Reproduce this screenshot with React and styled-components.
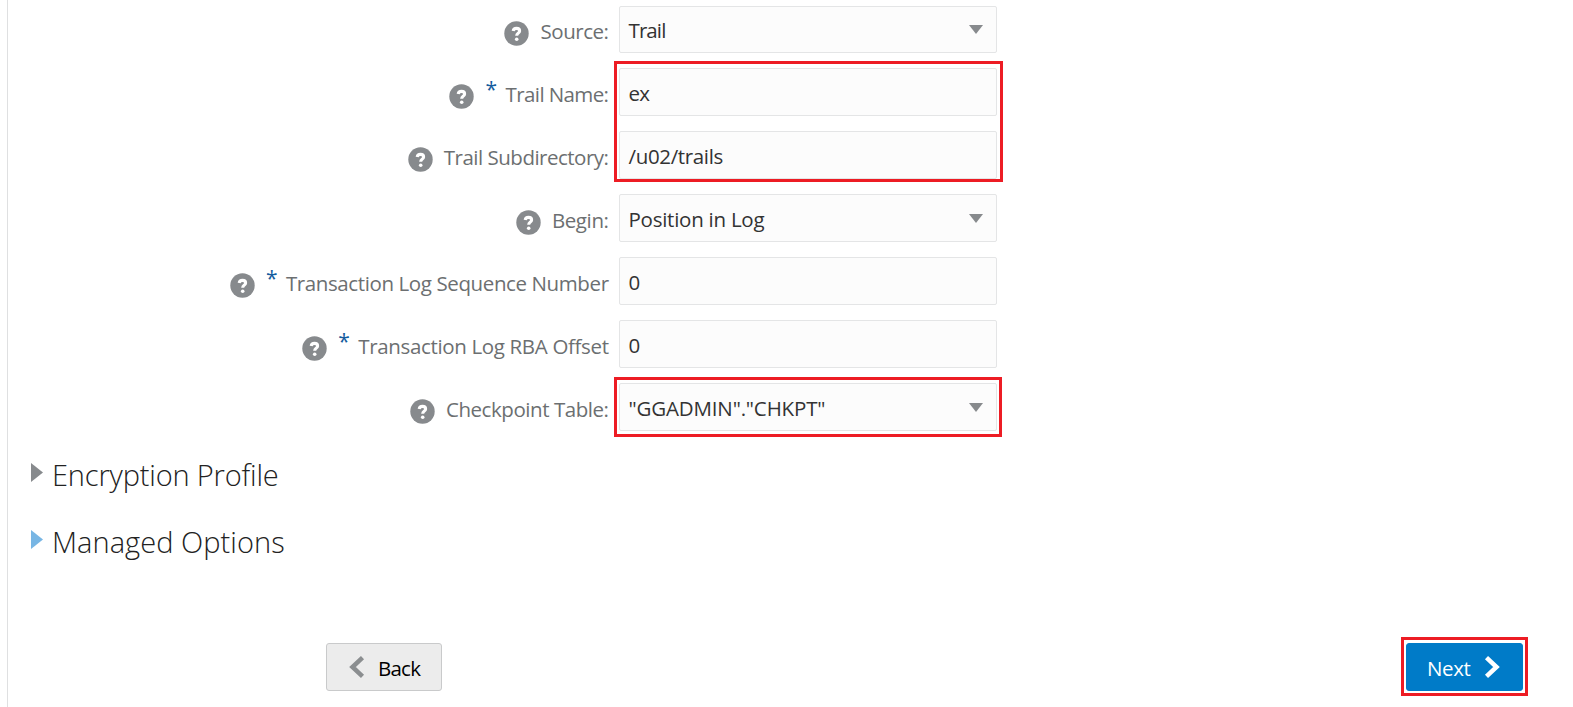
import React from 'react';
import styled, { createGlobalStyle } from 'styled-components';

const GlobalStyle = createGlobalStyle`
  * { box-sizing: border-box; }
  body { margin: 0; background: #fff; font-family: "Open Sans", "Noto Sans", sans-serif; overflow: hidden; }
`;

const Page = styled.main`
  display: flex;
  flex-direction: column;
  height: 707px;
  margin-left: 7px;
  border-left: 1px solid #dfe0e1;
`;

const Form = styled.div`
  padding-top: 5px;
  display: flex;
  flex-direction: column;
  gap: 15px;
`;

const Row = styled.div`
  display: grid;
  grid-template-columns: 601px 378px;
  column-gap: 10px;
  height: 48px;
`;

const Label = styled.label`
  display: flex;
  justify-content: flex-end;
  align-items: flex-start;
  padding-top: 12px;
  color: #6c6f71;
  font-size: 20.5px;
  line-height: 28px;
  white-space: nowrap;
`;

const Text = styled.span`
  letter-spacing: ${(p) => p.$spacing || 0}px;
  margin-right: ${(p) => -(p.$spacing || 0)}px;
`;

const Star = styled.span`
  color: #145c9e;
  width: 11px;
  margin: -5px 9px 0 0;
  font-size: 21px;
`;

const HelpIcon = styled.svg`
  width: 25px;
  height: 25px;
  margin: 4px 11.3px 0 0;
`;

const Control = styled.div`
  display: flex;
  align-items: center;
  justify-content: space-between;
  height: ${(p) => (p.$first ? 47 : 48)}px;
  margin-top: ${(p) => (p.$first ? 1 : 0)}px;
  padding: ${(p) => (p.$first ? 0 : 2)}px 13px 0 8.5px;
  border: 1px solid #e4e5e6;
  border-radius: 2px;
  background: #fcfcfc;
  color: #333;
  font-size: 20.5px;
  line-height: 28px;
  white-space: nowrap;
`;

const Caret = styled.svg`
  width: 14px;
  height: 9px;
  margin-top: ${(p) => (p.$first ? 0 : -1)}px;
  fill: #878a8d;
`;

const Group = styled.div`
  position: relative;
  display: flex;
  flex-direction: column;
  gap: 15px;
`;

const Highlight = styled.div`
  position: absolute;
  pointer-events: none;
  border: 3px solid #ed1c24;
  left: ${(p) => p.$left}px;
  top: ${(p) => p.$top}px;
  width: ${(p) => p.$width}px;
  height: ${(p) => p.$height}px;
`;

const Sections = styled.div`
  display: flex;
  flex-direction: column;
  gap: 27px;
  margin-top: 24px;
  padding-left: 23px;
`;

const Section = styled.h2`
  display: flex;
  align-items: flex-start;
  margin: 0;
  height: 40px;
  font-size: 29px;
  font-weight: 300;
  line-height: 40px;
  color: #222;
  white-space: nowrap;
`;

const Disclosure = styled.svg`
  width: 12px;
  height: 19px;
  margin: 8px 9px 0 0;
  fill: ${(p) => p.$color};
`;

const Footer = styled.footer`
  display: flex;
  justify-content: space-between;
  margin: 81px 50px 0 318px;
`;

const Button = styled.button`
  display: flex;
  align-items: center;
  justify-content: space-between;
  width: ${(p) => (p.$primary ? 117 : 116)}px;
  height: 48px;
  padding: ${(p) => (p.$primary ? '0 22px 0 20px' : '0 20px 0 22px')};
  border: 1px solid ${(p) => (p.$primary ? '#007bc8' : '#c9cacb')};
  border-radius: 3px;
  background: ${(p) => (p.$primary ? '#007bc8' : '#ececec')};
  color: ${(p) => (p.$primary ? '#fff' : '#000')};
  font: 20.5px "Open Sans", "Noto Sans", sans-serif;
`;

const ButtonText = styled(Text)`
  padding-top: 2px;
`;

const Chevron = styled.svg`
  width: 16px;
  height: 22px;
  margin-top: -1px;
  fill: none;
  stroke: ${(p) => p.$color};
  stroke-width: 4.5;
`;

function Help() {
  return (
    <HelpIcon viewBox="0 0 25 25">
      <circle cx="12.5" cy="12.5" r="12.2" fill="#878a8d" />
      <path d="M9.2 10C9.4 8.3 10.6 7.4 12.5 7.4c1.9 0 3.1.9 3.1 2.5 0 2.2-2.9 2.3-2.9 4.8" fill="none" stroke="#fff" strokeWidth="3.1" />
      <circle cx="12.7" cy="18.2" r="1.8" fill="#fff" />
    </HelpIcon>
  );
}

function Field({ label, value, required, select, first, ls, vs }) {
  return (
    <Row>
      <Label>
        <Help />
        {required && <Star>*</Star>}
        <Text $spacing={ls}>{label}</Text>
      </Label>
      <Control $first={first}>
        <Text $spacing={vs}>{value}</Text>
        {select && (
          <Caret $first={first} viewBox="0 0 14 9"><path d="M0 0h14L7 9z" /></Caret>
        )}
      </Control>
    </Row>
  );
}

export default function App() {
  return (
    <Page>
      <GlobalStyle />
      <Form>
        <Field first select label="Source:" ls={-0.47} value="Trail" vs={-0.9} />
        <Group>
          <Field required label="Trail Name:" ls={-0.6} value="ex" vs={-0.8} />
          <Field label="Trail Subdirectory:" ls={-0.5} value="/u02/trails" vs={-0.35} />
          <Highlight $left={606} $top={-7} $width={389} $height={121} />
        </Group>
        <Field select label="Begin:" ls={-0.38} value="Position in Log" vs={-0.25} />
        <Field required label="Transaction Log Sequence Number" ls={-0.39} value="0" />
        <Field required label="Transaction Log RBA Offset" ls={-0.34} value="0" />
        <Group>
          <Field select label="Checkpoint Table:" ls={-0.44} value={'"GGADMIN"."CHKPT"'} vs={-0.16} />
          <Highlight $left={606} $top={-6} $width={388} $height={60} />
        </Group>
      </Form>
      <Sections>
        <Section>
          <Disclosure viewBox="0 0 12 19" $color="#878a8d"><path d="M0 0l12 9.5L0 19z" /></Disclosure>
          <Text $spacing={-0.17}>Encryption Profile</Text>
        </Section>
        <Section>
          <Disclosure viewBox="0 0 12 19" $color="#78b6e4"><path d="M0 0l12 9.5L0 19z" /></Disclosure>
          <Text $spacing={0.05}>Managed Options</Text>
        </Section>
      </Sections>
      <Footer>
        <Button>
          <Chevron viewBox="0 0 16 22" $color="#8b8e90"><path d="M13.5 1.7L3.5 11l10 9.3" /></Chevron>
          <ButtonText $spacing={-0.7}>Back</ButtonText>
        </Button>
        <Group>
          <Button $primary>
            <ButtonText $spacing={-0.4}>Next</ButtonText>
            <Chevron viewBox="0 0 16 22" $color="#fff"><path d="M2.5 1.7L12.5 11l-10 9.3" /></Chevron>
          </Button>
          <Highlight $left={-5} $top={-6} $width={127} $height={59} />
        </Group>
      </Footer>
    </Page>
  );
}
